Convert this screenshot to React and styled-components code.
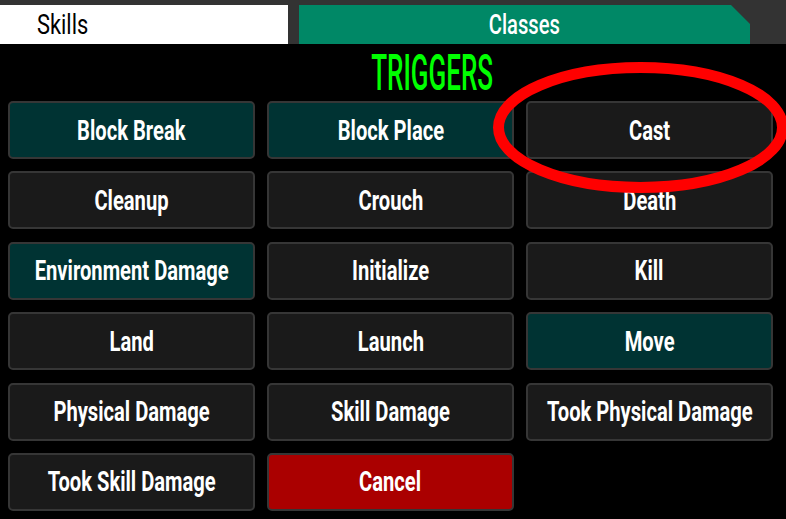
import React from "react";
import styled, { createGlobalStyle } from "styled-components";

const Global = createGlobalStyle`
  html, body { margin: 0; padding: 0; background: #000; }
  body { width: 786px; height: 519px; overflow: hidden; font-family: Roboto, "Liberation Sans", sans-serif; }
`;

const Page = styled.div`
  position: relative;
  width: 786px;
  height: 519px;
  background: #000;
  overflow: hidden;
`;

const Header = styled.div`
  display: flex;
  align-items: stretch;
  gap: 11px;
  height: 44px;
  box-sizing: border-box;
  padding-top: 5px;
  background: #333333;
`;

const Squeeze = styled.span`
  display: inline-block;
  flex-shrink: 0;
  white-space: nowrap;
  transform: scaleX(${(p) => p.$sx});
  transform-origin: ${(p) => p.$origin || "center"};
`;

const SkillsTab = styled.div`
  width: 288px;
  background: #ffffff;
  display: flex;
  align-items: center;
  padding-left: 37px;
  box-sizing: border-box;
  color: #000;
  font-size: 28px;
  font-weight: 400;
`;

const ClassesTab = styled.div`
  width: 451px;
  background: #008866;
  display: flex;
  align-items: center;
  justify-content: center;
  color: #fff;
  font-size: 28px;
  font-weight: 500;
  clip-path: polygon(0 0, 432px 0, 451px 19px, 451px 100%, 0 100%);
`;

const Title = styled.div`
  height: 57px;
  display: flex;
  align-items: center;
  justify-content: center;
  padding-left: 78px;
  color: #00ff00;
  font-size: 50px;
  font-weight: 500;
  line-height: 1;
`;

const Grid = styled.div`
  display: grid;
  grid-template-columns: repeat(3, 247px);
  grid-auto-rows: 58px;
  column-gap: 12px;
  row-gap: 12.4px;
  padding-left: 8px;
`;

const variants = {
  dark: "#1a1a1a",
  teal: "#003333",
  red: "#aa0000",
};

const Button = styled.div`
  box-sizing: border-box;
  display: flex;
  align-items: center;
  justify-content: center;
  background: ${(p) => variants[p.$variant]};
  border: 2px solid #363636;
  border-radius: 5px;
  color: #fff;
  font-size: 28px;
  font-weight: 700;
  overflow: visible;
`;

const Overlay = styled.svg`
  position: absolute;
  left: 0;
  top: 0;
  pointer-events: none;
`;

const triggers = [
  ["Block Break", "teal"],
  ["Block Place", "teal"],
  ["Cast", "dark"],
  ["Cleanup", "dark"],
  ["Crouch", "dark"],
  ["Death", "dark"],
  ["Environment Damage", "teal"],
  ["Initialize", "dark"],
  ["Kill", "dark"],
  ["Land", "dark"],
  ["Launch", "dark"],
  ["Move", "teal"],
  ["Physical Damage", "dark"],
  ["Skill Damage", "dark"],
  ["Took Physical Damage", "dark"],
  ["Took Skill Damage", "dark"],
  ["Cancel", "red"],
];

export default function App() {
  return (
    <Page>
      <Global />
      <Header>
        <SkillsTab>
          <Squeeze $sx={0.78} $origin="left center">Skills</Squeeze>
        </SkillsTab>
        <ClassesTab>
          <Squeeze $sx={0.72}>Classes</Squeeze>
        </ClassesTab>
      </Header>
      <Title>
        <Squeeze $sx={0.52}>TRIGGERS</Squeeze>
      </Title>
      <Grid>
        {triggers.map(([label, v]) => (
          <Button key={label} $variant={v}>
            <Squeeze $sx={0.72}>{label}</Squeeze>
          </Button>
        ))}
      </Grid>
      <Overlay width="786" height="519" viewBox="0 0 786 519">
        <ellipse cx="640.5" cy="127.5" rx="142" ry="60" fill="none" stroke="#ff0000" strokeWidth="11" />
      </Overlay>
    </Page>
  );
}
